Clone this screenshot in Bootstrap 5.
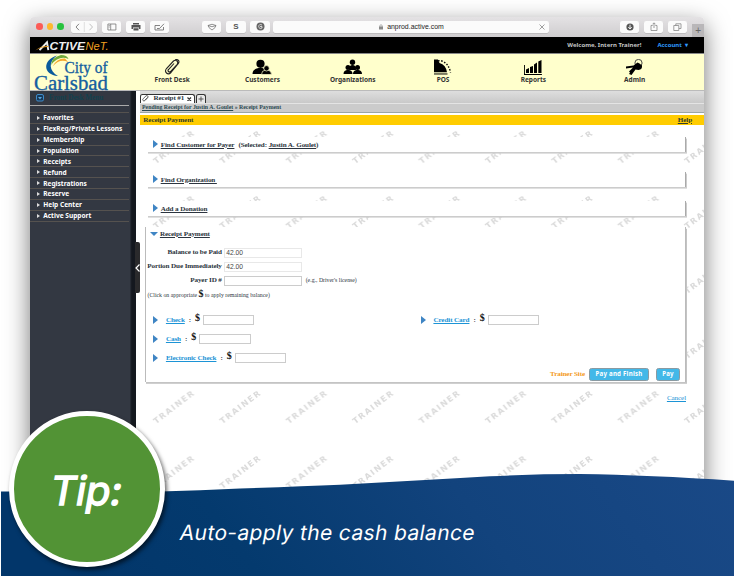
<!DOCTYPE html>
<html lang="en">
<head>
<meta charset="utf-8">
<title>Tip: Auto-apply the cash balance</title>
<link rel="stylesheet" href="https://cdn.jsdelivr.net/npm/bootstrap@5.3.0/dist/css/bootstrap.min.css">
<style>
html,body{margin:0;width:734px;height:576px;overflow:hidden;background:#fff}
body{position:relative;font:bold 7.15px/1 "Liberation Serif",serif;letter-spacing:-.12px;color:#2c3540}
svg{display:block;flex:none}
a{color:inherit;text-underline-offset:1px;text-decoration-thickness:.6px}
.win{width:674px;height:540px;margin:17px 0 0 30px;border-radius:4px 4px 0 0;box-shadow:0 8px 25px rgba(0,0,0,.55)}
.chrome{height:19.5px;background:linear-gradient(#e4e2e4,#cfcdcf);border-radius:4px 4px 0 0;padding-left:6.4px}
.dot{width:6.6px;height:6.6px;border-radius:50%;margin-right:3.9px}
.tb{width:19.3px;height:11.8px;background:#fbfbfb;border-radius:2px;box-shadow:0 .5px .5px rgba(0,0,0,.2);display:flex;align-items:center;justify-content:center;margin-right:4.8px;flex:none;font:bold 8px "Liberation Sans",sans-serif;color:#555}
.url{width:276px;font:6.9px "Liberation Sans",sans-serif;color:#222;letter-spacing:.02px;position:relative}
.plus{width:12px;height:13px;background:#b9b7b9;align-self:flex-end;font:10px/13px "Liberation Sans",sans-serif;color:#666;text-align:center}
.black{height:17px;background:#000;border-bottom:1px solid #888;font:bold 6px "Noto Sans",sans-serif;letter-spacing:0;color:#c4c4c4}
.mods{height:37.5px;background:#ffc;border-bottom:1px solid #bbb}
.mod{width:90.3px;font:bold 6.5px/8px "Noto Sans",sans-serif;letter-spacing:0;color:#333;padding-top:5.5px}
.mod svg{height:17px;width:22px;margin-bottom:.3px}
.side{width:105.5px;height:465px;background:linear-gradient(90deg,#333842 0 94%,#14181f 96% 100%);font:bold 6.57px "Noto Sans",sans-serif;letter-spacing:0;color:#fff;flex:none}
.shead{height:15px;width:99px;padding-left:6px;border-bottom:1px solid #aaa;font:bold 7.2px "Liberation Serif",serif;color:#12414f}
.item{height:10.87px;width:98.5px;padding-left:7.2px;border-top:.8px solid #55524f;white-space:pre}
.item i{width:0;height:0;border:2px solid transparent;border-left:3px solid #ddd;border-right:0;margin-right:3px}
.main{width:564px;margin-left:4.5px}
.strip{height:13px;background:linear-gradient(#dedede,#c9c9c9);border-bottom:1px solid #e4e4e4}
.tabx{height:9.3px;border:1px solid #333;border-bottom:0;border-radius:2.5px 2.5px 0 0;background:#fff;white-space:nowrap}
.crumb{height:9.2px;background:#cbcbcb;border-bottom:1px solid #9aa6a6;font-size:5.83px;letter-spacing:0;padding-left:2px;margin-bottom:1.4px;color:#2c4a52}
.ttl{height:10px;background:#fc0;padding:1px 12px 0 3.3px;color:#323c2c}
.pg{position:relative;height:427px;overflow:hidden;background:#fff}
.wm{position:absolute;left:0;top:0}
.box1{position:relative;background:#fff;width:539px;margin-left:7px;height:15px;padding:2px 0 0 6px;border-right:1px solid #aaa;box-shadow:1px 1.6px 0 #ccc}
.box2{position:relative;background:#fff;width:541px;margin-left:5px;height:155.5px;border:solid #bbb;border-width:0 1px 0 .6px;box-shadow:1px 1.8px 0 #c4c4c4}
.tri{width:0;height:0;border:4px solid transparent;border-left:5px solid #3f85c4;border-right:0;margin-right:2.7px;flex:none}
.box1 .tri{margin-top:-2px}
.trid{width:0;height:0;border:4.4px solid transparent;border-top:4.8px solid #3f85c4;border-bottom:0;margin-right:2.4px}
.fld{height:10px;border:1px solid #ccc;border-radius:0;padding:0 0 0 1px;font:6.7px/8px "Liberation Sans",sans-serif;letter-spacing:0;color:#444;background:#fff}
.frow{height:14px}
.frow label{width:75.8px;text-align:right;margin-right:2.4px;white-space:nowrap}
.prow{height:19.1px}
.prow a{color:#1c94d6}
.prow .tri{margin-right:7.5px;margin-left:-.6px}
.prow .fld{width:51.5px;margin-left:3px}
.dl{font:bold 10px/10px "Liberation Serif",serif;color:#111;margin-top:-4px}
.note{font-weight:400;font-size:5.8px;letter-spacing:0}
.bt{height:12.6px;background:#43b8e8;border:.8px solid #8a9aa2;border-radius:2.5px;padding:0;font:bold 6.1px/10.5px "Noto Sans",sans-serif;color:#fff;letter-spacing:.25px;text-align:center}
.handle{position:absolute;left:135px;top:242px;width:5px;height:51px;background:#2a2a2c;border-radius:0 2px 2px 0}
.wave{position:absolute;left:0;top:470px}
.tipc{position:absolute;left:9.3px;top:411px;width:155.6px;height:155.6px;border-radius:50%;border:5.2px solid #fff;background:#529335;box-shadow:2px 3px 4px rgba(0,0,0,.6);color:#fff;font:400 40px "Inter",sans-serif;letter-spacing:0;-webkit-text-stroke:1.5px #fff}
.slant{transform:skewX(-10deg)}
.tipc .slant{margin-top:3px}
.cap{position:absolute;left:179.5px;top:519px;color:#fff;font:400 21px/28px "Inter",sans-serif;letter-spacing:.36px;white-space:nowrap}
</style>
<script src="https://cdn.jsdelivr.net/npm/bootstrap@5.3.0/dist/js/bootstrap.bundle.min.js"></script>
</head>
<body>
<div class="win">
  <div class="chrome d-flex align-items-center">
    <span class="dot" style="background:#fc5b57"></span><span class="dot" style="background:#fdb82f"></span><span class="dot" style="background:#27c23e"></span>
    <span class="tb" style="width:26.5px;margin-left:3.2px"><svg width="26" height="10" fill="none" stroke="#777" stroke-width=".9"><path d="M8 1.8 5 5l3 3.2"/><path d="M13.3-1v12" stroke="#ddd"/><path d="M18.5 1.8 21.500 5l-3 3.200" stroke="#bbb"/></svg></span>
    <span class="tb"><svg width="10" height="8" fill="none" stroke="#777" stroke-width=".8"><path d="M.9 1h8v6h-8zM3.700 1v6M1.700 2.500h1M1.700 4h1"/></svg></span>
    <span class="tb"><svg width="10" height="8"><path d="M2 0h6v1.500h-6zM.5 2h9v4h-1.500v-1.500h-6v1.500h-1.500zM2.500 5.200h5v2.300h-5z" fill="#555"/></svg></span>
    <span class="tb" style="margin-right:32.700px"><svg width="11" height="8" fill="none" stroke="#666" stroke-width=".8"><path d="M6 2.500h-5v4.500h8.500v-3M3 5.500h2.500L10 .8"/></svg></span>
    <span class="tb"><svg width="10" height="8" fill="none" stroke="#777" stroke-width=".8"><path d="M1 2.500q4-2.500 8 0q0 2-4 4.500q-4-2.500-4-4.500q4 2.500 8 0"/></svg></span>
    <span class="tb">S</span>
    <span class="tb"><svg width="9" height="9"><circle cx="4.500" cy="4.500" r="4" fill="#666"/><path d="M6 3q-3-1.500-3.300 1.500q.5 3 3.300 1.500v-1.500h-2" fill="none" stroke="#eee" stroke-width=".8"/></svg></span>
    <span class="tb url" style="margin-left:-1px;margin-right:70.500px"><svg class="me-1" width="4" height="6"><path d="M0 2.500h4v3h-4z" fill="#888"/><path d="M.9 3v-1.200a1.100 1.100 0 0 1 2.200 0v1.200" fill="none" stroke="#888" stroke-width=".6"/></svg>anprod.active.com<svg class="position-absolute end-0 me-1" width="6" height="6" stroke="#888" stroke-width=".8"><path d="M.5.5l5 5M5.500.5l-5 5"/></svg></span>
    <span class="tb"><svg width="8" height="8"><circle cx="4" cy="4" r="3.600" fill="#555"/><path d="M4 1.700v4M2.300 4l1.700 2L5.700 4" fill="none" stroke="#fff" stroke-width=".9"/></svg></span>
    <span class="tb"><svg width="8" height="9" fill="none" stroke="#888" stroke-width=".8"><path d="M2.700 3.500h-1.700v5h6v-5h-1.700M4 6v-5M2.500 2.300L4 .8l1.500 1.500"/></svg></span>
    <span class="tb"><svg width="9" height="8" fill="none" stroke="#888" stroke-width=".8"><path d="M.8 2.500h5v5h-5zM2.800 2.500v-1.700h5.200v4.700h-2"/></svg></span>
    <span class="plus">+</span>
  </div>
  <div class="black d-flex align-items-center">
    <svg width="86" height="16"><path d="M9.500 13.200L17 5.300l1.300 7.900" fill="none" stroke="#eee" stroke-width="1.900"/><path d="M5.500 13.200q5-4.500 13-4.300l-.2 1.200q-7-.5-12.800 3.100z" fill="#f0a020"/><text x="19.500" y="13.200" font-family="Liberation Sans" font-weight="bold" font-style="italic" font-size="11" textLength="35.500" lengthAdjust="spacingAndGlyphs" fill="#eee">CTIVE</text><text x="55.500" y="13.200" font-weight="400" font-family="Liberation Sans" font-style="italic" font-size="11.500" textLength="23" lengthAdjust="spacingAndGlyphs" fill="#f0a020">NeT.</text></svg>
    <span class="ms-auto">Welcome, Intern Trainer!</span><span style="color:#2f9bff;margin:0 16px 0 16px">Account &nbsp;▾</span>
  </div>
  <div class="mods d-flex">
    <svg width="97" height="37" font-family="Liberation Serif" font-weight="400" letter-spacing="0" overflow="visible"><path d="M28 22C13 21 12 6 27 1.500C18 8 19 17 28 22z" fill="#0a5a9c"/><path d="M21 11Q22 3 31 1Q37 1 38.500 5Q29 1 21 11z" fill="#6ea83a"/><path d="M23 12Q27 4 35 4.500L38 8Q30 4 23 12z" fill="#f5a52a"/><g fill="#1560a0" stroke="#1560a0" stroke-width=".35"><text x="34.500" y="18.500" font-size="16.500" textLength="43" lengthAdjust="spacingAndGlyphs">City of</text><text x="4" y="35.700" font-size="20" textLength="74" lengthAdjust="spacingAndGlyphs">Carlsbad</text></g></svg>
    <div class="mod d-flex flex-column align-items-center"><svg viewBox="0 0 22 17" fill="none" stroke="#222" stroke-width="1.100"><path d="M17 5L10 13.500q-2.500 2.500-4.500.5t0-4.500L12.500 2q2-1.500 3.500 0t0 3.500L9.500 12.500q-1 1-2 0t0-2L13 4.500M17 5q2-2.500 0-4q-1.500-1-3 0"/></svg>Front Desk</div>
    <div class="mod d-flex flex-column align-items-center"><svg viewBox="0 0 22 17"><circle cx="9.500" cy="4.800" r="4.100"/><path d="M1.500 15q0-5 6-6h4q4 1 1 6z"/><g stroke="#ffc" stroke-width=".7"><path d="M10.500 15.500q0-4 4-4.500h2q4 .5 4 4.500z"/><circle cx="15.500" cy="9.300" r="2.700"/></g></svg>Customers</div>
    <div class="mod d-flex flex-column align-items-center"><svg viewBox="0 0 22 17"><circle cx="10.500" cy="3.300" r="2.700"/><path d="M7 11q0-5 3.500-5t3.500 5z"/><circle cx="6" cy="8.500" r="2.500"/><circle cx="15.500" cy="8.500" r="2.500"/><path d="M1.500 15q0-4 4.500-4.300q4.500.3 4.500 4.300zM11 15q0-4 4.500-4.300q4.500.3 4.500 4.300z"/></svg>Organizations</div>
    <div class="mod d-flex flex-column align-items-center"><svg viewBox="0 0 22 17"><path d="M2 .5h4l1.500 3.500q6.500 2 7.500 9.300h-13z"/><path d="M2 14.200h13.500v1.500h-13.500z" fill="#554"/><path d="M6 1.700h3q8 2.500 9.500 12" fill="none" stroke="#111" stroke-width="1.400" stroke-dasharray="1.600 1.500"/></svg>POS</div>
    <div class="mod d-flex flex-column align-items-center"><svg viewBox="0 0 22 17"><path d="M2 6h.9v9h17v.9h-17.900zM4 10.500l3-1.500v5h-3zM8 8l3-1v7h-3zM12 5.500l3-2v10.500h-3zM16.300 2.500l3.200-1.500v13h-3.200z"/></svg>Reports</div>
    <div class="mod d-flex flex-column align-items-center" style="margin-left:11px"><svg viewBox="0 0 22 17"><circle cx="14.500" cy="4" r="3.600" fill="none" stroke="#333" stroke-width=".9"/><path d="M2 7.500l7.500-1 4-3 2 1 2.500 2q.5 4-3.500 4.500l-3-.5-4 5.500-2.500-1 1-1.500-1-1 4-4-7 1z"/></svg>Admin</div>
  </div>
  <div class="d-flex">
    <div class="side">
      <div class="shead d-flex align-items-center"><svg class="me-1" width="8" height="8"><rect x=".5" y=".5" width="7" height="6.500" rx="1.500" fill="#16395a" stroke="#3f8ac8"/><path d="M2 3h4l-2 2.500z" fill="#5aa5dd"/></svg><span style="margin-left:1px">Front Desk Menu</span></div>
      <div style="height:6px"></div>
      <div class="item d-flex align-items-center"><i></i>Favorites</div>
      <div class="item d-flex align-items-center"><i></i>FlexReg/Private Lessons</div>
      <div class="item d-flex align-items-center"><i></i>Membership</div>
      <div class="item d-flex align-items-center"><i></i>Population</div>
      <div class="item d-flex align-items-center"><i></i>Receipts</div>
      <div class="item d-flex align-items-center"><i></i>Refund</div>
      <div class="item d-flex align-items-center"><i></i>Registrations</div>
      <div class="item d-flex align-items-center"><i></i>Reserve</div>
      <div class="item d-flex align-items-center"><i></i>Help Center</div>
      <div class="item d-flex align-items-center"><i></i>Active Support</div>
      <div class="item"></div>
    </div>
    <div class="bg-white"><div class="main">
      <div class="strip d-flex align-items-end">
        <div class="tabx d-flex align-items-center" style="width:54.500px"><svg style="margin:0 4.500px 0 1px" width="7" height="7" fill="none" stroke="#444" stroke-width=".8"><path d="M5.800 2.500L3 5.500q-1.200 1-2 0t.3-2L4 .9q1-.8 1.800.1t-.2 1.700L3 5"/></svg>Receipt #1<svg style="margin-left:3px" width="4.500" height="4.500" stroke="#333" stroke-width="1.200"><path d="M.5.5l3.500 3.500M4 .5L.5 4"/></svg></div>
        <div class="tabx d-flex align-items-center justify-content-center" style="width:10.500px;margin-left:1px;background:#e8e8e8"><svg width="6" height="6" stroke="#555" stroke-width="1"><path d="M3 .5v5M.5 3h5"/></svg></div>
      </div>
      <div class="crumb d-flex align-items-center"><a href="#">Pending Receipt for Justin A. Goulet</a><span>&nbsp;» Receipt Payment</span></div>
      <div class="ttl d-flex align-items-center justify-content-between"><span>Receipt Payment</span><a href="#">Help</a></div>
      <div class="pg">
        <svg class="wm" width="564" height="427"><defs><pattern id="trainer" patternUnits="userSpaceOnUse" x="1" y="-3" width="66.400" height="65"><text transform="translate(15 42.200) rotate(-37.500)" font-family="DejaVu Sans" font-weight="bold" letter-spacing="0" font-size="8.200" textLength="48.500" fill="#dadada">TRAINER</text></pattern></defs><rect width="564" height="427" fill="url(#trainer)"/></svg>
        <div class="box1 d-flex align-items-center" style="margin-top:12px"><span class="tri"></span><a href="#">Find Customer for Payer</a><span class="ms-1">(Selected: <a href="#">Justin A. Goulet</a>)</span></div>
        <div class="box1 d-flex align-items-center" style="margin-top:20px"><span class="tri"></span><a href="#">Find Organization&nbsp;</a></div>
        <div class="box1 d-flex align-items-center" style="margin-top:14px"><span class="tri"></span><a href="#">Add a Donation</a></div>
        <div class="box2" style="margin-top:11.300px">
          <div class="d-flex align-items-center" style="height:14.500px;padding:0 0 0 3.500px"><span class="trid"></span><a href="#">Receipt Payment</a></div>
          <div style="height:4.500px"></div>
          <div class="frow d-flex align-items-center"><label>Balance to be Paid</label><div class="fld" style="width:77.500px;border-color:#e8e8e8">42.00</div></div>
          <div class="frow d-flex align-items-center"><label>Portion Due Immediately</label><div class="fld" style="width:77.500px;border-color:#e8e8e8">42.00</div></div>
          <div class="frow d-flex align-items-center"><label>Payer ID #</label><div class="fld" style="width:77.500px"></div><span class="note ms-1">(e.g., Driver's license)</span></div>
          <div class="note d-flex align-items-center" style="height:17px;padding-left:1.500px">(Click on appropriate&nbsp;<span class="dl">$</span>&nbsp;to apply remaining balance)</div>
          <div class="d-flex" style="padding:5.800px 0 0 8px"><div style="width:267.500px">
            <div class="prow d-flex align-items-center"><span class="tri"></span><a href="#">Check</a><span class="mx-1">:</span><span class="dl">$</span><div class="fld"></div></div>
            <div class="prow d-flex align-items-center"><span class="tri"></span><a href="#">Cash</a><span class="mx-1">:</span><span class="dl">$</span><div class="fld"></div></div>
            <div class="prow d-flex align-items-center"><span class="tri"></span><a href="#">Electronic Check</a><span class="mx-1">:</span><span class="dl">$</span><div class="fld"></div></div>
          </div><div>
            <div class="prow d-flex align-items-center"><span class="tri"></span><a href="#">Credit Card</a><span class="mx-1">:</span><span class="dl">$</span><div class="fld"></div></div>
          </div></div>
          <div class="d-flex align-items-center justify-content-end" style="padding-right:5px;color:#f49a1c">Trainer Site<div class="bt" style="width:60px;margin:0 7px 0 4px">Pay and Finish</div><div class="bt" style="width:24px">Pay</div></div>
        </div>
        <div class="position-relative text-end" style="width:546px;padding-top:12.500px;font-weight:400;color:#1c94d6"><a href="#">Cancel</a></div>
      </div>
    </div></div>
  </div>
</div>
<div class="handle d-flex align-items-center"><svg width="5" height="8" fill="none" stroke="#fff" stroke-width="1.200"><path d="M4.500.5L1 4l3.500 3.500"/></svg></div>
<svg class="wave" width="734" height="106"><defs><linearGradient id="sea" x2="1" y2="-.1"><stop offset="0" stop-color="#02366a"/><stop offset=".25" stop-color="#043a6e"/><stop offset=".6" stop-color="#12437d"/><stop offset="1" stop-color="#1a4987"/></linearGradient></defs><path d="M1 21.500H160Q200 20.500 240 18.500Q300 16.500 340 14.700Q420 10.500 490 6.300Q535 4 580 4Q650 5 734 10.700V106H1z" fill="url(#sea)"/></svg>
<div class="tipc d-flex align-items-center justify-content-center"><span class="slant">Tip:</span></div>
<div class="cap slant">Auto-apply the cash balance</div>
</body>
</html>
